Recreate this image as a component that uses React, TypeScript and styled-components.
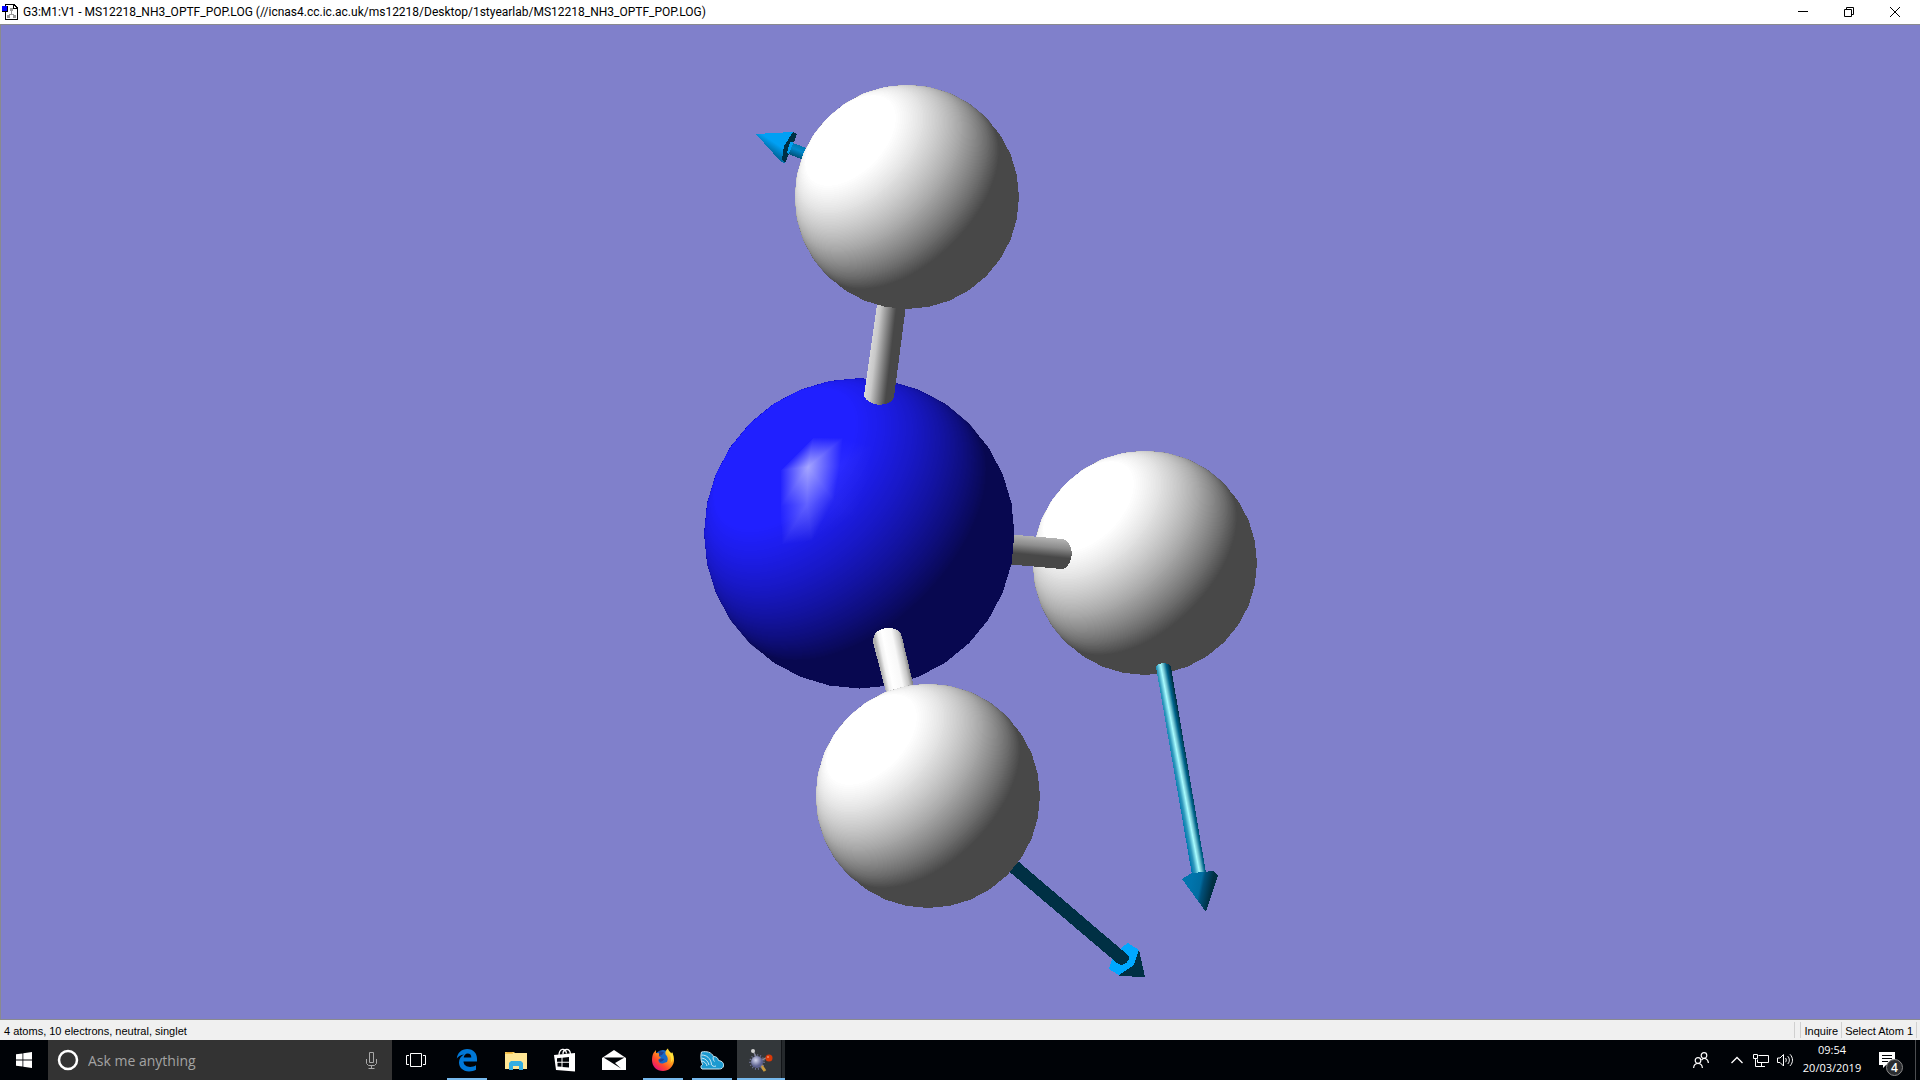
import React from "react";
import styled, { createGlobalStyle } from "styled-components";

const GlobalStyle = createGlobalStyle`
  * { box-sizing: border-box; }
  body { margin: 0; background: #000307; }
  button, input { font: inherit; color: inherit; }
  svg { flex-shrink: 0; }
`;

const ui = `"Open Sans", "Noto Sans", sans-serif`;

const Desktop = styled.div`
  display: flex;
  flex-direction: column;
  height: 100vh;
  overflow: hidden;
  font-family: ${ui};
`;

const TitleBar = styled.header`
  display: flex;
  align-items: center;
  height: 24px;
  padding: 0 2px;
  background: #fff;
  color: #000;
`;

const Title = styled.h1`
  flex: 1;
  margin: 0 0 0 5px;
  font-family: Roboto, "Open Sans", sans-serif;
  font-size: 12px;
  font-weight: 400;
  line-height: 22px;
  white-space: nowrap;
`;

const WindowButton = styled.button`
  display: flex;
  align-items: center;
  justify-content: center;
  width: 46px;
  height: 22px;
  padding: 0;
  border: 0;
  background: none;
`;

const Viewport = styled.main`
  flex: 1;
  min-height: 0;
  border: 1px solid #8a8a8f;
  border-width: 1px 0 1px 1px;
  background: #8080cb;
`;

const Scene = styled.svg`
  display: block;
  width: 100%;
  height: 100%;
`;

const StatusBar = styled.footer`
  display: flex;
  align-items: center;
  height: 20px;
  padding-left: 4px;
  background: #f0f0f0;
  color: #000;
  font-family: "Liberation Sans", Arial, sans-serif;
  font-size: 11px;
  line-height: 20px;
`;

const StatusMessage = styled.span`
  flex: 1;
  padding-top: 2px;
`;

const StatusCell = styled.span`
  height: 16px;
  padding: 0 3px;
  border-left: 1px solid #d0d0d0;
  line-height: 18px;
  white-space: nowrap;
`;

const StatusGap = styled.span<{ $width: number }>`
  width: ${(p) => p.$width}px;
  height: 16px;
  border-left: 1px solid #d0d0d0;
`;

const Taskbar = styled.nav`
  display: flex;
  align-items: stretch;
  height: 40px;
  background: #000307;
  color: #fff;
`;

const StartButton = styled.button`
  display: flex;
  align-items: center;
  justify-content: center;
  width: 48px;
  padding: 0;
  border: 0;
  background: none;
`;

const Search = styled.label`
  display: flex;
  align-items: center;
  width: 344px;
  padding: 0 15px 0 9px;
  background: #333;
`;

const SearchInput = styled.input`
  flex: 1;
  min-width: 0;
  margin: 0 9px;
  padding: 0;
  border: 0;
  outline: 0;
  background: none;
  font-size: 14px;
  &::placeholder { color: #a3a3a3; opacity: 1; }
`;

const Apps = styled.div`
  display: flex;
  flex: 1;
  gap: 1px;
  margin-left: 3px;
`;

const AppButton = styled.button<{ $running?: boolean; $active?: boolean }>`
  display: flex;
  align-items: center;
  justify-content: center;
  width: 48px;
  padding: 0;
  border: 0;
  background: ${(p) =>
    p.$active
      ? "linear-gradient(#76b9ed, #76b9ed) 0 100% / 100% 2px no-repeat, linear-gradient(90deg, #33373a 44px, #111417 44px, #111417 45px, #25292c 45px)"
      : p.$running
        ? "linear-gradient(#76b9ed, #76b9ed) 50% 100% / 40px 2px no-repeat"
        : "none"};
`;

const TaskView = styled(StartButton)``;

const Tray = styled.div`
  display: flex;
  align-items: stretch;
`;

const TrayButton = styled.button<{ $width: number }>`
  display: flex;
  align-items: center;
  justify-content: center;
  width: ${(p) => p.$width}px;
  padding: 0;
  border: 0;
  background: none;
`;

const Clock = styled.time`
  width: 70px;
  font-size: 11px;
  line-height: 18px;
  text-align: center;
  padding-top: 1px;
`;

const Notifications = styled.button`
  position: relative;
  width: 48px;
  padding: 0;
  border: 0;
  background: none;
  text-align: left;
  & > svg { display: block; margin-left: 12px; }
`;

const Badge = styled.span`
  position: absolute;
  left: 19px;
  top: 19px;
  width: 17px;
  height: 17px;
  border: 1px solid #8a8a8a;
  border-radius: 50%;
  background: #2b2d30;
  font-size: 12px;
  font-weight: 600;
  line-height: 15px;
  text-align: center;
`;

const ShowDesktop = styled.button`
  width: 5px;
  padding: 0;
  border: 0;
  border-left: 1px solid #4b4d50;
  background: none;
`;

/* ---- molecule geometry ---- */

type Point = [number, number];
type Rgb = [number, number, number];

const path = (pts: Point[]) =>
  "M" + pts.map(([x, y]) => `${x.toFixed(1)} ${y.toFixed(1)}`).join("L") + "Z";

// Light from the upper left, towards the viewer: IN_PLANE and DEPTH are its unit components.
const IN_PLANE = 0.816;
const DEPTH = 0.577;
const TILT = Math.atan2(IN_PLANE, DEPTH);

/* Outline of the visible part of a sphere whose normal meets the light at more than `level`. */
function litRegion(cx: number, cy: number, r: number, level: number): string {
  const reach = Math.sqrt(1 - level * level);
  const near: Point[] = [];
  const far: Point[] = [];
  const steps = 48;
  for (let i = 0; i <= steps; i++) {
    const b = -reach * Math.cos((Math.PI * i) / steps);
    const rho = Math.sqrt(Math.max(0, 1 - b * b));
    const spread = Math.acos(Math.min(1, level / Math.max(rho, 0.0001)));
    const place = (t: number): Point => {
      const a = rho * Math.sin(t);
      return [cx + r * (-a + b) * Math.SQRT1_2, cy + r * (-a - b) * Math.SQRT1_2];
    };
    near.push(place(Math.max(-Math.PI / 2, TILT - spread)));
    far.unshift(place(Math.min(Math.PI / 2, TILT + spread)));
  }
  return path([...near, ...far]);
}

const outline = (cx: number, cy: number, r: number, sides = 32): Point[] =>
  Array.from({ length: sides }, (_, i) => {
    const a = (2 * Math.PI * i) / sides;
    return [cx + r * Math.cos(a), cy + r * Math.sin(a)];
  });

interface SphereProps {
  id: string;
  cx: number;
  cy: number;
  r: number;
  dark: Rgb;
  bright: Rgb;
  full: number;
}

function Sphere({ id, cx, cy, r, dark, bright, full }: SphereProps) {
  const bands = 90;
  const shape = path(outline(cx, cy, r));
  return (
    <g>
      <clipPath id={id}>
        <path d={shape} />
      </clipPath>
      <path d={shape} fill={`rgb(${dark.join(",")})`} />
      <g clipPath={`url(#${id})`}>
        {Array.from({ length: bands }, (_, i) => {
          const f = (i + 1) / bands;
          const c = dark.map((d, k) => Math.round(d + (bright[k] - d) * f));
          return <path key={i} d={litRegion(cx, cy, r * 1.003, (i / bands) * full)} fill={`rgb(${c.join(",")})`} />;
        })}
      </g>
    </g>
  );
}

/* Triangle whose white tint runs linearly between the strengths at its corners. */
type Vertex = [number, number, number];
function Facet({ id, v }: { id: string; v: [Vertex, Vertex, Vertex] }) {
  const [[x1, y1, s1], [x2, y2, s2], [x3, y3, s3]] = v;
  const det = (x2 - x1) * (y3 - y1) - (x3 - x1) * (y2 - y1);
  const gx = ((s2 - s1) * (y3 - y1) - (s3 - s1) * (y2 - y1)) / det;
  const gy = ((s3 - s1) * (x2 - x1) - (s2 - s1) * (x3 - x1)) / det;
  const g2 = gx * gx + gy * gy;
  const at = (s: number): Point => [x1 + (gx * (s - s1)) / g2, y1 + (gy * (s - s1)) / g2];
  const [ax, ay] = at(0);
  const [bx, by] = at(1);
  return (
    <>
      <linearGradient id={id} gradientUnits="userSpaceOnUse" x1={ax} y1={ay} x2={bx} y2={by}>
        <stop offset="0" stopColor="#b4b4ff" stopOpacity="0" />
        <stop offset="1" stopColor="#b4b4ff" stopOpacity="0.9" />
      </linearGradient>
      <path d={path([[x1, y1], [x2, y2], [x3, y3]])} fill={`url(#${id})`} />
    </>
  );
}

const peak: Vertex = [808, 467, 1];
const lower: Vertex = [807, 504, 0.5];
const side: Vertex = [840, 466, 0.08];
const corner: Vertex = [834, 500, 0.06];
const left: Vertex = [781, 506, 0.04];
const rim: Vertex[] = [
  [781, 470, 0.03],
  [813, 438, 0.03],
  [843, 438, 0],
  side,
  corner,
];
const glint: [Vertex, Vertex, Vertex][] = [
  [peak, rim[0], rim[1]],
  [peak, rim[1], rim[2]],
  [peak, rim[2], rim[3]],
  [peak, rim[3], rim[4]],
  [peak, rim[4], lower],
  [peak, lower, left],
  [peak, left, rim[0]],
  [lower, corner, [812, 541, 0]],
  [lower, [812, 541, 0], [782, 545, 0]],
  [lower, [782, 545, 0], left],
  [rim[2], side, [872, 446, 0]],
  [side, [872, 446, 0], [868, 480, 0]],
  [side, corner, [868, 480, 0]],
  [corner, [868, 480, 0], [856, 516, 0]],
  [corner, [856, 516, 0], [812, 541, 0]],
];

interface Stop {
  at: number;
  color: string;
}
function Ramp({ id, from, to, stops }: { id: string; from: Point; to: Point; stops: Stop[] }) {
  return (
    <linearGradient id={id} gradientUnits="userSpaceOnUse" x1={from[0]} y1={from[1]} x2={to[0]} y2={to[1]}>
      {stops.map((s) => (
        <stop key={s.at} offset={s.at} stopColor={s.color} />
      ))}
    </linearGradient>
  );
}

const hydrogen = { r: 112, dark: [72, 72, 72] as Rgb, bright: [255, 255, 255] as Rgb, full: 0.88 };

function Molecule() {
  return (
    <Scene viewBox="1 25 1919 994" shapeRendering="crispEdges" role="img" aria-label="Ammonia molecule with displacement vectors">
      <defs>
        <Ramp id="bondA" from={[868, 350]} to={[902, 354]} stops={[{ at: 0, color: "#dedede" }, { at: 0.22, color: "#c8c8c8" }, { at: 0.68, color: "#484848" }]} />
        <Ramp id="bondB" from={[1041, 537]} to={[1038, 567]} stops={[{ at: 0, color: "#b4b4b4" }, { at: 0.3, color: "#8c8c8c" }, { at: 0.62, color: "#484848" }]} />
        <Ramp id="bondC" from={[880, 664]} to={[909, 658]} stops={[{ at: 0, color: "#b0b0b0" }, { at: 0.14, color: "#f0f0f0" }, { at: 0.28, color: "#ffffff" }, { at: 0.6, color: "#f8f8f8" }, { at: 0.82, color: "#c4c4c4" }, { at: 1, color: "#686868" }]} />
        <Ramp id="rodA" from={[799, 145]} to={[794, 157]} stops={[{ at: 0, color: "#0078b0" }, { at: 0.4, color: "#0088cc" }, { at: 1, color: "#004c70" }]} />
        <Ramp id="coneA" from={[780, 132]} to={[768, 150]} stops={[{ at: 0, color: "#00a0f4" }, { at: 0.55, color: "#00a0f4" }, { at: 1, color: "#006ca4" }]} />
        <Ramp id="rodB" from={[1173, 771]} to={[1189, 768]} stops={[{ at: 0, color: "#0078b0" }, { at: 0.2, color: "#3098bc" }, { at: 0.45, color: "#a8fcff" }, { at: 0.58, color: "#78c8d4" }, { at: 0.78, color: "#00648c" }, { at: 1, color: "#003044" }]} />
        <Ramp id="coneB" from={[1190, 888]} to={[1214, 893]} stops={[{ at: 0, color: "#0074ac" }, { at: 0.38, color: "#006ca0" }, { at: 0.5, color: "#00507a" }, { at: 0.85, color: "#003044" }]} />
      </defs>

      <path fill="url(#rodA)" d="M790 142L812 150L806 161L786 153Z" />
      <path fill="url(#coneA)" d="M756 134L792 132L797 134L785 163L781 162Z" />
      <path fill="#003044" d="M793 132L797 134L794 142L790 142L787 153L789 154L785 163L782 160L784 146Z" />

      <path fill="#003044" d="M1139 950L1145 977L1119 976Z" />
      <path fill="#00a8ff" d="M1128 943L1139 950L1134 965L1119 975L1109 969L1112 959L1122 947Z" />
      <path fill="#003044" d="M1019 862L1129 956Q1129 964 1121 965L1117 963L1005 868Z" />

      <Sphere id="h3" cx={1145} cy={563} {...hydrogen} />
      <path fill="url(#bondB)" d="M1005 534L1063 539Q1070 540 1072 553Q1070 568 1062 569L1005 564Z" />

      <Sphere id="n" cx={859.5} cy={533.5} r={155} dark={[8, 8, 80]} bright={[32, 32, 255]} full={0.84} />
      {glint.map((v, i) => (
        <Facet key={i} id={`glint${i}`} v={v} />
      ))}
      <path fill="url(#bondA)" d="M879 290L908 290L894 397Q892 404 879 405Q867 403 864 396Z" />
      <Sphere id="h1" cx={907} cy={197} {...hydrogen} />
      <path fill="url(#bondC)" d="M873 642Q873 629 888 628Q900 628 902 637L917 700L888 700Z" />
      <Sphere id="h4" cx={928} cy={796} {...hydrogen} />

      <path fill="url(#rodB)" d="M1156 667Q1158 663 1164 663Q1170 664 1171 667L1206 873L1192 875Z" />
      <path fill="url(#coneB)" d="M1182 879L1192 873L1203 872L1213 871L1218 876L1206 912Z" />
    </Scene>
  );
}

/* ---- icons ---- */

const FileIcon = () => (
  <svg width="16" height="16" viewBox="0 0 16 16" shapeRendering="crispEdges" aria-hidden="true">
    <path d="M3 0h9l4 4v12H3z" fill="#000" />
    <path d="M4 1h7v4h4v10H4z" fill="#fff" />
    <path d="M12 2l2 2h-2z" fill="#fff" />
    <path d="M8 4h3v3H8zM9 7h1v3H9zM7 10h5v1H7zM5 11h3v3H5zM11 11h3v3h-3z" fill="#999" />
    <path d="M0 2h6v6H0z" fill="#000" />
    <path d="M0 2h5v5H0z" fill="#00f" />
  </svg>
);

const WindowsIcon = () => (
  <svg width="16" height="16" viewBox="0 0 16 16" fill="#fff" aria-hidden="true">
    <path d="M0 2.3L6.5 1.4V7.6H0zM7.3 1.3L16 0v7.6H7.3zM0 8.4h6.5v6.2L0 13.7zM7.3 8.4H16V16l-8.7-1.3z" />
  </svg>
);

const MicIcon = () => (
  <svg width="11" height="17" viewBox="0 0 11 17" fill="none" stroke="#a8a8a8" aria-hidden="true">
    <path d="M3.5 .5h4v10h-4zM.5 7v4.5l2 2h6l2-2V7M5.500 13.500v3M2.500 16.500h6" />
  </svg>
);

const TaskViewIcon = () => (
  <svg width="20" height="14" viewBox="0 0 20 14" fill="none" stroke="#fff" aria-hidden="true">
    <path d="M4.500 .5h11v13h-11zM3 2.500H.5v9H3M17 2.500h2.500v9H17" />
  </svg>
);

const EdgeIcon = () => (
  <svg width="22" height="24" viewBox="0 0 22 24" aria-hidden="true">
    <path fill="#0078d7" d="M.8 10.6C1.400 5 5.400 1 11.200 1 17.600 1 21 5.500 21 10.800v2.700H7.500c.2 3.800 3.300 5.400 6.600 5.400 2.300 0 4.300-.6 5.900-1.600v4.500c-2 1-4.300 1.600-7 1.600C6.800 23.400 3 19.600 3 14.600c0-3.600 1.900-6.500 4.900-8.100C4.500 6.900 2 8.500.8 10.600zM7.700 9.600h7.600c.1-2.700-1.300-4.100-3.600-4.100-2.200 0-3.700 1.700-4 4.100z" />
  </svg>
);

const ExplorerIcon = () => (
  <svg width="22" height="19" viewBox="0 0 22 19" aria-hidden="true">
    <path fill="#f5c64f" d="M0 1h9l2 2H0z" />
    <path fill="#ffe694" d="M0 2h22v16H0z" />
    <path fill="#f5c64f" d="M0 1h8v2H0z" />
    <path fill="#e8a93a" d="M2 1h5v1H2z" />
    <path fill="#33aee2" d="M4 18v-6l2-2h10l2 2v7h-4v-4H8v4H4z" />
  </svg>
);

const StoreIcon = () => (
  <svg width="22" height="24" viewBox="0 0 22 24" aria-hidden="true">
    <path d="M5 7.500C5 .5 11.500-1 12.500 5.500M9 6C9 1 15.500-1 16.500 6" fill="none" stroke="#fff" strokeWidth="1.300" />
    <path fill="#fff" d="M0 7l21-2v18.500L2 22z" />
    <path fill="#000307" d="M3 10.200l4.500-.4v4H3zM8.500 9.700l6.500-.6v4.700H8.500zM3.500 14.800h4v4L3.500 18.400zM8.500 14.800H15v4.700l-6.500-.6z" />
  </svg>
);

const MailIcon = () => (
  <svg width="24" height="20" viewBox="0 0 24 20" aria-hidden="true">
    <path fill="#fff" d="M0 8L12 0l12 8v12H0z" />
    <path fill="#000307" d="M1.500 7.500h21L13 13l6 5.500z" />
  </svg>
);

const FirefoxIcon = () => (
  <svg width="24" height="24" viewBox="0 0 24 24" aria-hidden="true">
    <defs>
      <linearGradient id="fox" x1=".85" y1=".1" x2=".2" y2=".9">
        <stop offset="0" stopColor="#ffe23a" />
        <stop offset=".4" stopColor="#ff9a1c" />
        <stop offset=".7" stopColor="#ff4b2b" />
        <stop offset="1" stopColor="#e8186f" />
      </linearGradient>
    </defs>
    <circle cx="12" cy="11" r="9" fill="#1668c8" />
    <path fill="url(#fox)" d="M2.500 5L5 2v3l5 .5L7.500 8l2.500 1.500-2.500 2C7 15 10.500 16.500 13 15c2-1 3-1 3-1 1.500-3 .5-5.500-1-7C13.500 5 15 1.500 17 .5c0 2 2 3 3.500 5L21 4c1.500 3 2.300 6 2 9-.8 6-5.500 10-11 10C5.500 23 1 18.500 1 12c0-2.500.5-5 1.500-7z" />
    <path fill="#22408e" d="M8 3l5 1-2 3-3 1zM7.500 12l3-1.500 3 .5-2 2-2 1z" />
    <path fill="#ffe23a" d="M16 2c3 4 5.500 8 3.500 13 3-3 3.500-7 1.500-10.500L20.500 6z" />
  </svg>
);

const CloudIcon = () => (
  <svg width="24" height="19" viewBox="0 0 24 19" aria-hidden="true">
    <path fill="#1c9ad0" stroke="#c9e8f5" d="M2 18c-1.500-1-1.500-3.500.5-4.500C.5 9 .5 4 1.500 1c5-1 10 0 12 4.500 3 0 4.500 1.500 5 4 4 .5 5.500 3 5 5.500-.5 2-2 3-4 3z" />
    <path fill="none" stroke="#c9e8f5" d="M1.500 4c5 0 9 3 10 9M1.500 7c4 .5 6.500 3 7.500 7M2 10c3 1 4.500 2.500 5 5M11 13c1 2 3 3 5 2M13.500 5.500c-1 1.500 0 4 1 5" />
  </svg>
);

const MoleculeIcon = () => (
  <svg width="24" height="24" viewBox="0 0 24 24" aria-hidden="true">
    <defs>
      <radialGradient id="core" cx=".4" cy=".35">
        <stop offset="0" stopColor="#d5d8f0" />
        <stop offset="1" stopColor="#5d6290" />
      </radialGradient>
    </defs>
    <path d="M4 3l5 9M9 14l8-4M9 14l6 8" stroke="#8a8c98" strokeWidth="1.500" />
    <path d="M12 17l4 6" stroke="#c79a3e" strokeWidth="3" />
    <circle cx="8" cy="14" r="7" fill="none" stroke="#7679a0" strokeWidth="1.500" strokeDasharray="1 2" />
    <circle cx="8" cy="14" r="6" fill="url(#core)" />
    <circle cx="4" cy="3" r="2" fill="#d2d2d2" />
    <circle cx="20" cy="10" r="3.500" fill="#d83808" />
    <circle cx="19" cy="9" r="1" fill="#f38b65" />
  </svg>
);

const PeopleIcon = () => (
  <svg width="16" height="17" viewBox="0 0 16 17" fill="none" stroke="#fff" strokeWidth="1.200" aria-hidden="true">
    <circle cx="11" cy="3.500" r="2.800" />
    <circle cx="5" cy="8.500" r="2.800" />
    <path d="M.6 16c.4-6 8.400-6 8.800 0M8.500 8c2.500-3 6.500-1.500 6.900 3" />
  </svg>
);

const NetworkIcon = () => (
  <svg width="16" height="14" viewBox="0 0 16 14" fill="none" stroke="#fff" aria-hidden="true">
    <path d="M5.500 2.500h10v7h-11v-3M8.500 10v3M5 13.500h7M.5 1.500h4v4h-4zM2.500 5.500v8h3" />
  </svg>
);

const VolumeIcon = () => (
  <svg width="17" height="14" viewBox="0 0 17 14" fill="none" stroke="#fff" aria-hidden="true">
    <path d="M.5 5v4.500h2.500L6.500 13V1.500L3 5zM8.500 5c1 1.200 1 3 0 4.200M10.700 3.200c2.200 2.300 2.200 5.600 0 7.800M13 1.300c3.300 3.400 3.300 8.200 0 11.600" />
  </svg>
);

export default function App() {
  return (
    <Desktop>
      <GlobalStyle />
      <TitleBar>
        <FileIcon />
        <Title>G3:M1:V1 - MS12218_NH3_OPTF_POP.LOG (//icnas4.cc.ic.ac.uk/ms12218/Desktop/1styearlab/MS12218_NH3_OPTF_POP.LOG)</Title>
        <WindowButton aria-label="Minimize">
          <svg width="10" height="10" viewBox="0 0 10 10" stroke="#000"><path d="M0 4.500h10" /></svg>
        </WindowButton>
        <WindowButton aria-label="Restore">
          <svg width="10" height="10" viewBox="0 0 10 10" fill="none" stroke="#000"><path d="M.5 2.500h7v7h-7zM2.500 2.500v-2h7v7h-2" /></svg>
        </WindowButton>
        <WindowButton aria-label="Close">
          <svg width="10" height="10" viewBox="0 0 10 10" stroke="#000"><path d="M0 0l10 10M10 0L0 10" /></svg>
        </WindowButton>
      </TitleBar>

      <Viewport>
        <Molecule />
      </Viewport>

      <StatusBar>
        <StatusMessage>4 atoms, 10 electrons, neutral, singlet</StatusMessage>
        <StatusGap $width={6} />
        <StatusCell>Inquire</StatusCell>
        <StatusCell>Select Atom 1</StatusCell>
        <StatusGap $width={4} />
      </StatusBar>

      <Taskbar>
        <StartButton aria-label="Start"><WindowsIcon /></StartButton>
        <Search>
          <svg width="22" height="22" viewBox="0 0 22 22" aria-hidden="true">
            <circle cx="11" cy="11" r="9" fill="none" stroke="#fff" strokeWidth="2.500" />
          </svg>
          <SearchInput type="text" placeholder="Ask me anything" aria-label="Ask me anything" />
          <MicIcon />
        </Search>
        <TaskView aria-label="Task view"><TaskViewIcon /></TaskView>
        <Apps>
          <AppButton aria-label="Edge" $running><EdgeIcon /></AppButton>
          <AppButton aria-label="File Explorer"><ExplorerIcon /></AppButton>
          <AppButton aria-label="Store"><StoreIcon /></AppButton>
          <AppButton aria-label="Mail"><MailIcon /></AppButton>
          <AppButton aria-label="Firefox" $running><FirefoxIcon /></AppButton>
          <AppButton aria-label="Cloud" $running><CloudIcon /></AppButton>
          <AppButton aria-label="Molecule viewer" $active><MoleculeIcon /></AppButton>
        </Apps>
        <Tray>
          <TrayButton $width={48} aria-label="People"><PeopleIcon /></TrayButton>
          <TrayButton $width={24} aria-label="Show hidden icons">
            <svg width="12" height="8" viewBox="0 0 12 8" fill="none" stroke="#fff" strokeWidth="1.300"><path d="M.5 7L6 1.500 11.500 7" /></svg>
          </TrayButton>
          <TrayButton $width={24} aria-label="Network"><NetworkIcon /></TrayButton>
          <TrayButton $width={24} aria-label="Volume"><VolumeIcon /></TrayButton>
          <Clock>09:54<br />20/03/2019</Clock>
          <Notifications aria-label="4 notifications">
            <svg width="16" height="16" viewBox="0 0 16 16" aria-hidden="true">
              <path fill="#fff" d="M0 0h16v13H7l-3 3v-3H0z" />
              <path stroke="#000307" d="M3 3.500h10M3 6.500h10M3 9.500h6" />
            </svg>
            <Badge>4</Badge>
          </Notifications>
          <ShowDesktop aria-label="Show desktop" />
        </Tray>
      </Taskbar>
    </Desktop>
  );
}
